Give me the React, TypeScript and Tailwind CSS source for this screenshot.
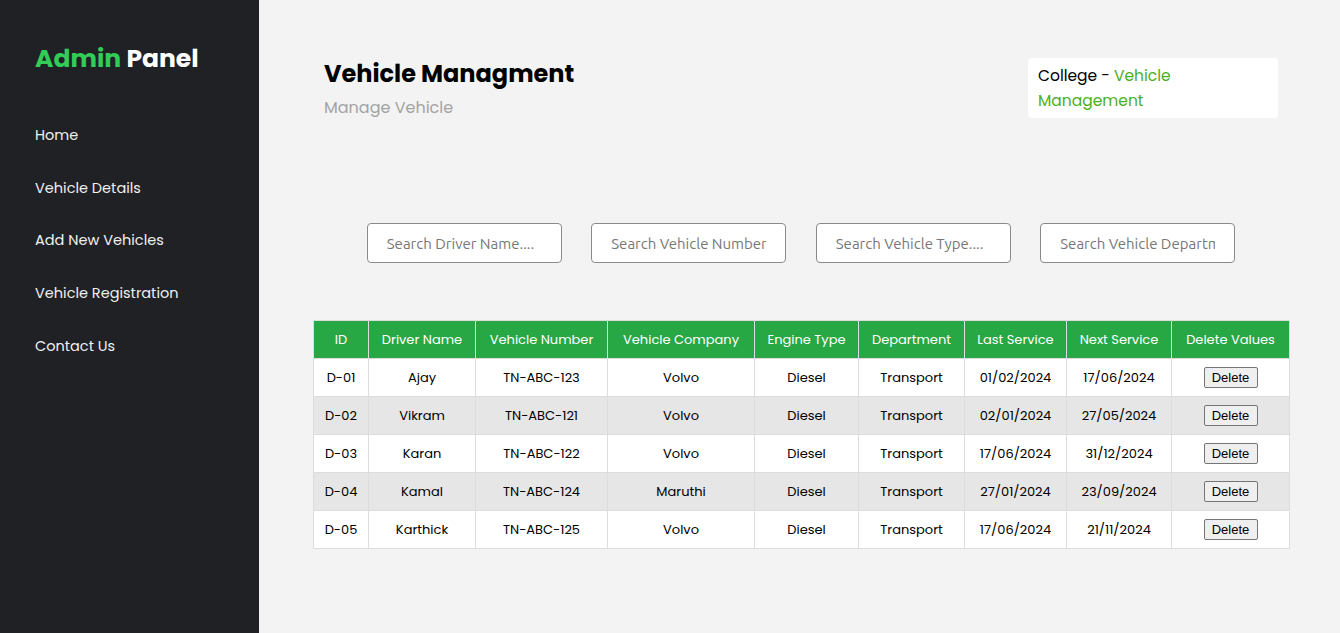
import React from 'react';

interface Vehicle {
  id: string;
  driver: string;
  number: string;
  company: string;
  engine: string;
  department: string;
  lastService: string;
  nextService: string;
}

const vehicles: Vehicle[] = [
  { id: 'D-01', driver: 'Ajay', number: 'TN-ABC-123', company: 'Volvo', engine: 'Diesel', department: 'Transport', lastService: '01/02/2024', nextService: '17/06/2024' },
  { id: 'D-02', driver: 'Vikram', number: 'TN-ABC-121', company: 'Volvo', engine: 'Diesel', department: 'Transport', lastService: '02/01/2024', nextService: '27/05/2024' },
  { id: 'D-03', driver: 'Karan', number: 'TN-ABC-122', company: 'Volvo', engine: 'Diesel', department: 'Transport', lastService: '17/06/2024', nextService: '31/12/2024' },
  { id: 'D-04', driver: 'Kamal', number: 'TN-ABC-124', company: 'Maruthi', engine: 'Diesel', department: 'Transport', lastService: '27/01/2024', nextService: '23/09/2024' },
  { id: 'D-05', driver: 'Karthick', number: 'TN-ABC-125', company: 'Volvo', engine: 'Diesel', department: 'Transport', lastService: '17/06/2024', nextService: '21/11/2024' },
];

const navItems = ['Home', 'Vehicle Details', 'Add New Vehicles', 'Vehicle Registration', 'Contact Us'];

const searches = [
  'Search Driver Name....',
  'Search Vehicle Number....',
  'Search Vehicle Type....',
  'Search Vehicle Department....',
];

const headers = [
  { label: 'ID', w: 'w-[55px]' },
  { label: 'Driver Name', w: 'w-[107px]' },
  { label: 'Vehicle Number', w: 'w-[132px]' },
  { label: 'Vehicle Company', w: 'w-[147px]' },
  { label: 'Engine Type', w: 'w-[104px]' },
  { label: 'Department', w: 'w-[106px]' },
  { label: 'Last Service', w: 'w-[102px]' },
  { label: 'Next Service', w: 'w-[105px]' },
  { label: 'Delete Values', w: 'w-[118px]' },
];

export default function App() {
  return (
    <div className="flex h-[633px] w-full font-['Poppins','Inter',sans-serif] overflow-hidden">
      {/* Sidebar */}
      <aside className="w-[259px] shrink-0 bg-[#202125] px-[35px] pt-[41px]">
        <h1 className="text-[25px] font-bold leading-[36px]">
          <span className="text-[#32cd57]">Admin</span> <span className="text-white">Panel</span>
        </h1>
        <nav className="mt-[47px] flex flex-col">
          {navItems.map((item) => (
            <a key={item} href="#" className="h-[52.7px] text-[14.5px] leading-[22px] text-[#f0f0f0]">
              {item}
            </a>
          ))}
        </nav>
      </aside>

      {/* Main */}
      <main className="flex-1 bg-[#f3f3f3]">
        <div className="flex items-start justify-between pl-[65px] pr-[62px] pt-[57px]">
          <div>
            <h2 className="text-[24px] font-bold leading-[34px] text-black">Vehicle Managment</h2>
            <p className="mt-[5px] text-[16px] leading-[24px] text-[#a3a3a3]">Manage Vehicle</p>
          </div>
          <div className="mt-[1px] w-[250px] rounded-[4px] bg-white px-[10px] py-[5px] text-[15.5px] leading-[25px] text-black">
            College - <span className="text-[#4caf22]">Vehicle Management</span>
          </div>
        </div>

        <div className="mt-[103px] flex justify-center gap-[29.5px] pl-[3px]">
          {searches.map((s) => (
            <input
              key={s}
              placeholder={s}
              className="h-[40px] w-[195px] rounded-[4px] border border-[#8a8a8a] bg-white px-[19px] text-[15px] font-['Ubuntu','DejaVu_Sans',sans-serif] text-[#555] placeholder:text-[#777] outline-none"
            />
          ))}
        </div>

        <div className="mt-[57px] flex justify-center pl-[4px]">
          <table className="w-[976px] table-fixed border-collapse text-[13px]">
            <thead>
              <tr className="bg-[#28a745] text-white">
                {headers.map((h) => (
                  <th key={h.label} className={`${h.w} h-[38px] border border-[#dddddd] font-normal`}>
                    {h.label}
                  </th>
                ))}
              </tr>
            </thead>
            <tbody>
              {vehicles.map((v, i) => (
                <tr key={v.id} className={i % 2 === 1 ? 'bg-[#e6e6e6]' : 'bg-white'}>
                  <td className="h-[38px] border border-[#dddddd] text-center text-black">{v.id}</td>
                  <td className="border border-[#dddddd] text-center text-black">{v.driver}</td>
                  <td className="border border-[#dddddd] text-center text-black">{v.number}</td>
                  <td className="border border-[#dddddd] text-center text-black">{v.company}</td>
                  <td className="border border-[#dddddd] text-center text-black">{v.engine}</td>
                  <td className="border border-[#dddddd] text-center text-black">{v.department}</td>
                  <td className="border border-[#dddddd] text-center text-black">{v.lastService}</td>
                  <td className="border border-[#dddddd] text-center text-black">{v.nextService}</td>
                  <td className="border border-[#dddddd] text-center">
                    <button className="h-[21px] w-[54px] rounded-[2px] border border-[#767676] bg-[#efefef] font-['Liberation_Sans',Arial,sans-serif] text-[13px] text-black">
                      Delete
                    </button>
                  </td>
                </tr>
              ))}
            </tbody>
          </table>
        </div>
      </main>
    </div>
  );
}
